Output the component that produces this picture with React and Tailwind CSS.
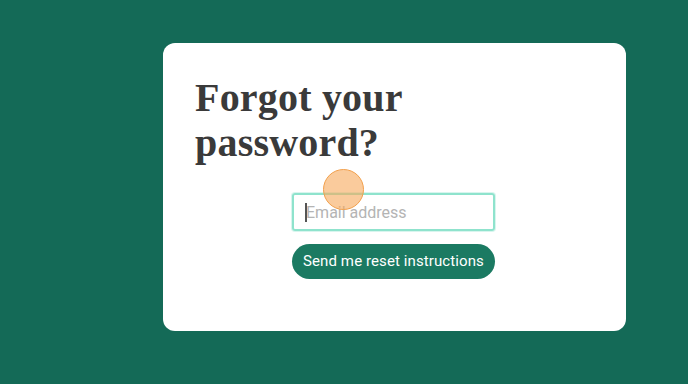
export default function App() {
  return (
    <div className="relative w-[688px] h-[384px] overflow-hidden bg-[#146a57]">
      <div className="pl-[163px] pt-[43px]">
        <div className="w-[463px] h-[288px] bg-white rounded-[12px] pt-8 px-8 flex flex-col">
          <h1
            className="text-[40px] leading-[45px] font-bold text-[#3a3a3a] tracking-[0.2px]"
            style={{ fontFamily: '"Liberation Serif", serif' }}
          >
            Forgot your
            <br />
            password?
          </h1>
          <div className="mt-[28px] flex flex-col items-center gap-[13px] pl-[-1px]">
            <div className="relative w-[203px] h-[38px] -ml-[2px]">
              <input
                className="w-full h-full border-2 border-[#8fe3cd] rounded-[3px] px-[12px] text-[16px] text-[#333] placeholder:text-[#b4b4b4] outline-none shadow-[0_0_0_1px_rgba(143,227,205,0.35)]"
                style={{ fontFamily: 'Roboto, "Liberation Sans", sans-serif' }}
                placeholder="Email address"
              />
              <span className="absolute left-[13px] top-[10px] w-[1.5px] h-[19px] bg-[#555]" />
            </div>
            <button
              className="w-[203px] h-[35px] -ml-[2px] rounded-full bg-[#1b7a62] text-white text-[15px] tracking-[0.1px]"
              style={{ fontFamily: 'Roboto, "Liberation Sans", sans-serif' }}
            >
              Send me reset instructions
            </button>
          </div>
        </div>
      </div>
      <div className="absolute left-[323px] top-[169px] w-[41px] h-[41px] rounded-full bg-[#f7a95a]/60 border border-[#f2a04c]" />
    </div>
  );
}
